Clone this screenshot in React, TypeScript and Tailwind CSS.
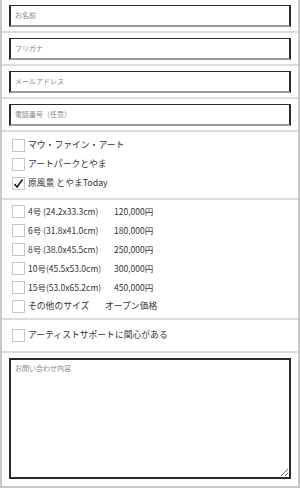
import React from "react";

const font = {
  fontFamily: '"Noto Sans CJK JP", "Noto Sans", sans-serif',
};

function Box({ checked }: { checked?: boolean }) {
  return (
    <span className="flex items-center justify-center w-[13px] h-[13px] border border-[#c6c6c6] bg-white shrink-0">
      {checked && (
        <svg width="11" height="11" viewBox="0 0 11 11">
          <polyline
            points="1.5,6 4,9 9.5,1.5"
            fill="none"
            stroke="#111"
            strokeWidth="1.4"
          />
        </svg>
      )}
    </span>
  );
}

function TextRow({ label }: { label: string }) {
  return (
    <div className="px-[7px] pt-[5px] pb-[4px] border-b-2 border-[#dcdcdc]">
      <div className="h-[22px] border-2 border-[#2b2b2b] border-b-[#9a9a9a] border-t-[1.5px] flex items-center pl-[4px] overflow-hidden">
        <span className="text-[7px] leading-none text-[#888]">{label}</span>
      </div>
    </div>
  );
}

export default function App() {
  const sizes = [
    ["4号 (24.2x33.3cm)", "120,000円"],
    ["6号 (31.8x41.0cm)", "180,000円"],
    ["8号 (38.0x45.5cm)", "250,000円"],
    ["10号(45.5x53.0cm)", "300,000円"],
    ["15号(53.0x65.2cm)", "450,000円"],
  ];

  return (
    <div
      style={font}
      className="w-[300px] h-[488px] bg-white border-x-2 border-b-2 border-[#c8c8c8] flex flex-col overflow-hidden"
    >
      <TextRow label="お名前" />
      <TextRow label="フリガナ" />
      <TextRow label="メールアドレス" />
      <TextRow label="電話番号（任意）" />

      <div className="pl-[10px] pt-[4px] pb-[5px] border-b-2 border-[#dcdcdc]">
        {["マウ・ファイン・アート", "アートパークとやま", "原風景 とやまToday"].map(
          (t, i) => (
            <div key={t} className="h-[19px] flex items-center gap-[3px]">
              <Box checked={i === 2} />
              <span className="text-[8.8px] text-[#333] leading-none">{t}</span>
            </div>
          )
        )}
      </div>

      <div className="pl-[10px] pt-[2px] pb-[2px] border-b-2 border-[#dcdcdc]">
        {sizes.map(([s, p]) => (
          <div key={s} className="h-[19px] flex items-center gap-[3px]">
            <Box />
            <span className="w-[83px] text-[8.5px] text-[#333] leading-none">{s}</span>
            <span className="text-[8.5px] text-[#333] leading-none">{p}</span>
          </div>
        ))}
        <div className="h-[19px] flex items-center gap-[3px]">
          <Box />
          <span className="w-[74px] text-[8.8px] text-[#333] leading-none">その他のサイズ</span>
          <span className="text-[8.8px] text-[#333] leading-none">オープン価格</span>
        </div>
      </div>

      <div className="pl-[10px] pt-[6px] pb-[6px] border-b-2 border-[#dcdcdc]">
        <div className="h-[19px] flex items-center gap-[3px]">
          <Box />
          <span className="text-[8.8px] text-[#333] leading-none">
            アーティストサポートに関心がある
          </span>
        </div>
      </div>

      <div className="px-[7px] pt-[5px] pb-[7px] flex-1 flex flex-col">
        <textarea
          placeholder="お問い合わせ内容"
          className="flex-1 w-full border-2 border-[#2b2b2b] px-[4px] py-[3px] text-[7px] placeholder:text-[#888] resize-y outline-none"
          style={font}
        />
      </div>
    </div>
  );
}
